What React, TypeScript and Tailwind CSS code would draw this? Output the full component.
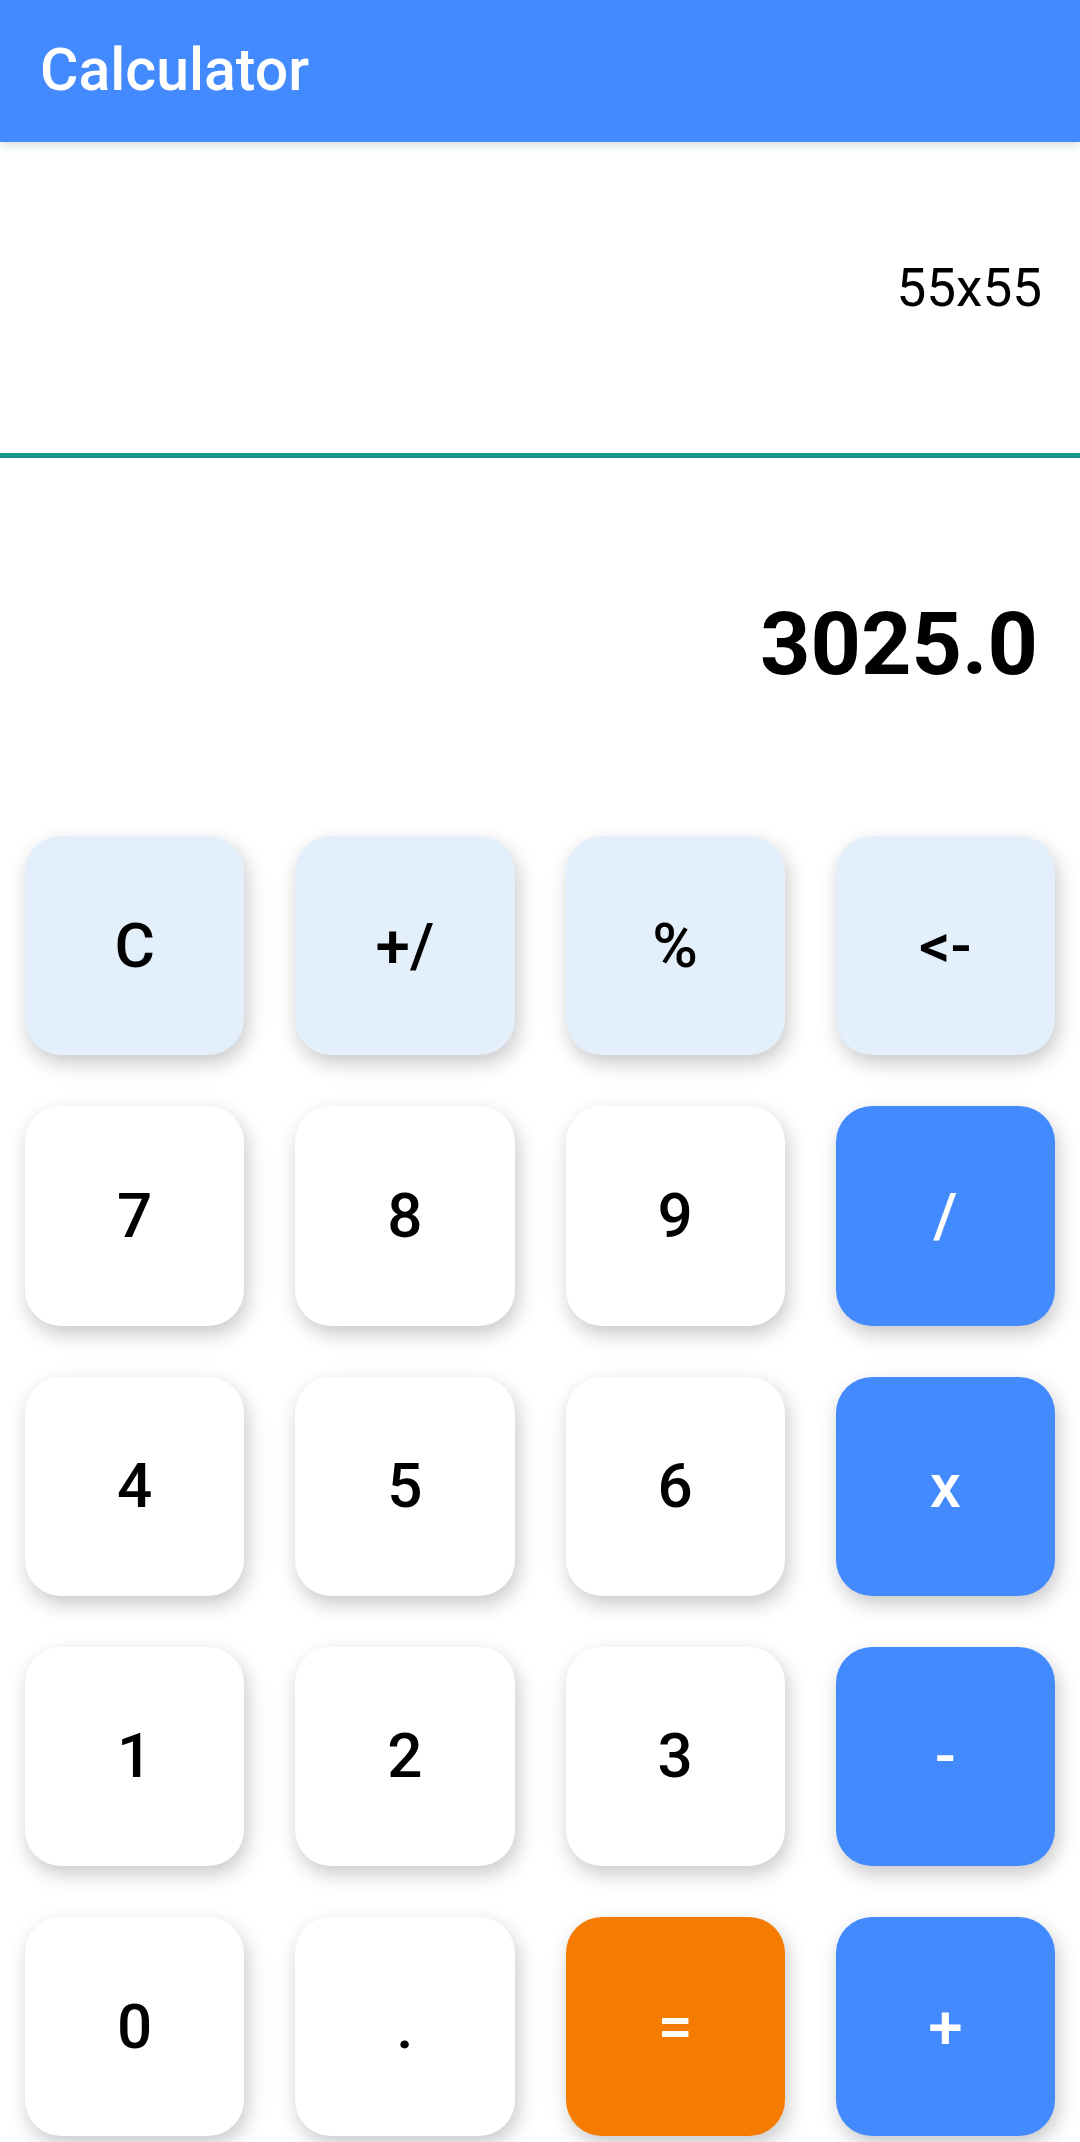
type Key = {
  label: string;
  kind: "fn" | "num" | "op" | "eq";
};

const keys: Key[] = [
  { label: "C", kind: "fn" },
  { label: "+/", kind: "fn" },
  { label: "%", kind: "fn" },
  { label: "<-", kind: "fn" },
  { label: "7", kind: "num" },
  { label: "8", kind: "num" },
  { label: "9", kind: "num" },
  { label: "/", kind: "op" },
  { label: "4", kind: "num" },
  { label: "5", kind: "num" },
  { label: "6", kind: "num" },
  { label: "x", kind: "op" },
  { label: "1", kind: "num" },
  { label: "2", kind: "num" },
  { label: "3", kind: "num" },
  { label: "-", kind: "op" },
  { label: "0", kind: "num" },
  { label: ".", kind: "num" },
  { label: "=", kind: "eq" },
  { label: "+", kind: "op" },
];

const keyStyles: Record<Key["kind"], string> = {
  fn: "bg-[#e3f0fc] text-black",
  num: "bg-white text-black",
  op: "bg-[#448aff] text-white",
  eq: "bg-[#f57c00] text-white",
};

const CalcKey = ({ label, kind }: Key) => {
  return (
    <button
      className={`aspect-square rounded-[36px] flex items-center justify-center text-[62px] font-medium leading-none shadow-[3px_8px_20px_rgba(0,0,0,0.22)] ${keyStyles[kind]}`}
    >
      {label}
    </button>
  );
};

const App = () => {
  return (
    <div
      className="w-[1080px] h-[2142px] bg-white overflow-hidden flex flex-col"
      style={{ fontFamily: "Roboto, 'Noto Sans', sans-serif" }}
    >
      <header className="relative z-10 h-[142px] bg-[#448aff] pl-[40px] pt-[40px] shadow-[0_4px_8px_rgba(20,90,80,0.16)]">
        <h1 className="text-white text-[59px] font-medium leading-none">Calculator</h1>
      </header>

      <div className="h-[311px] pt-[120px] pr-[38px] flex justify-end">
        <p className="text-black text-[53px] leading-none">55x55</p>
      </div>

      <div className="h-[5px] bg-[#15968a]" />

      <div className="pt-[142px] pr-[42px] flex justify-end">
        <p className="text-black text-[88px] font-bold leading-none">3025.0</p>
      </div>

      <div className="mt-[148px] px-[25px] grid grid-cols-4 gap-x-[51px] gap-y-[51px]">
        {keys.map((k) => (
          <CalcKey key={k.label} label={k.label} kind={k.kind} />
        ))}
      </div>
    </div>
  );
};

export default App;
